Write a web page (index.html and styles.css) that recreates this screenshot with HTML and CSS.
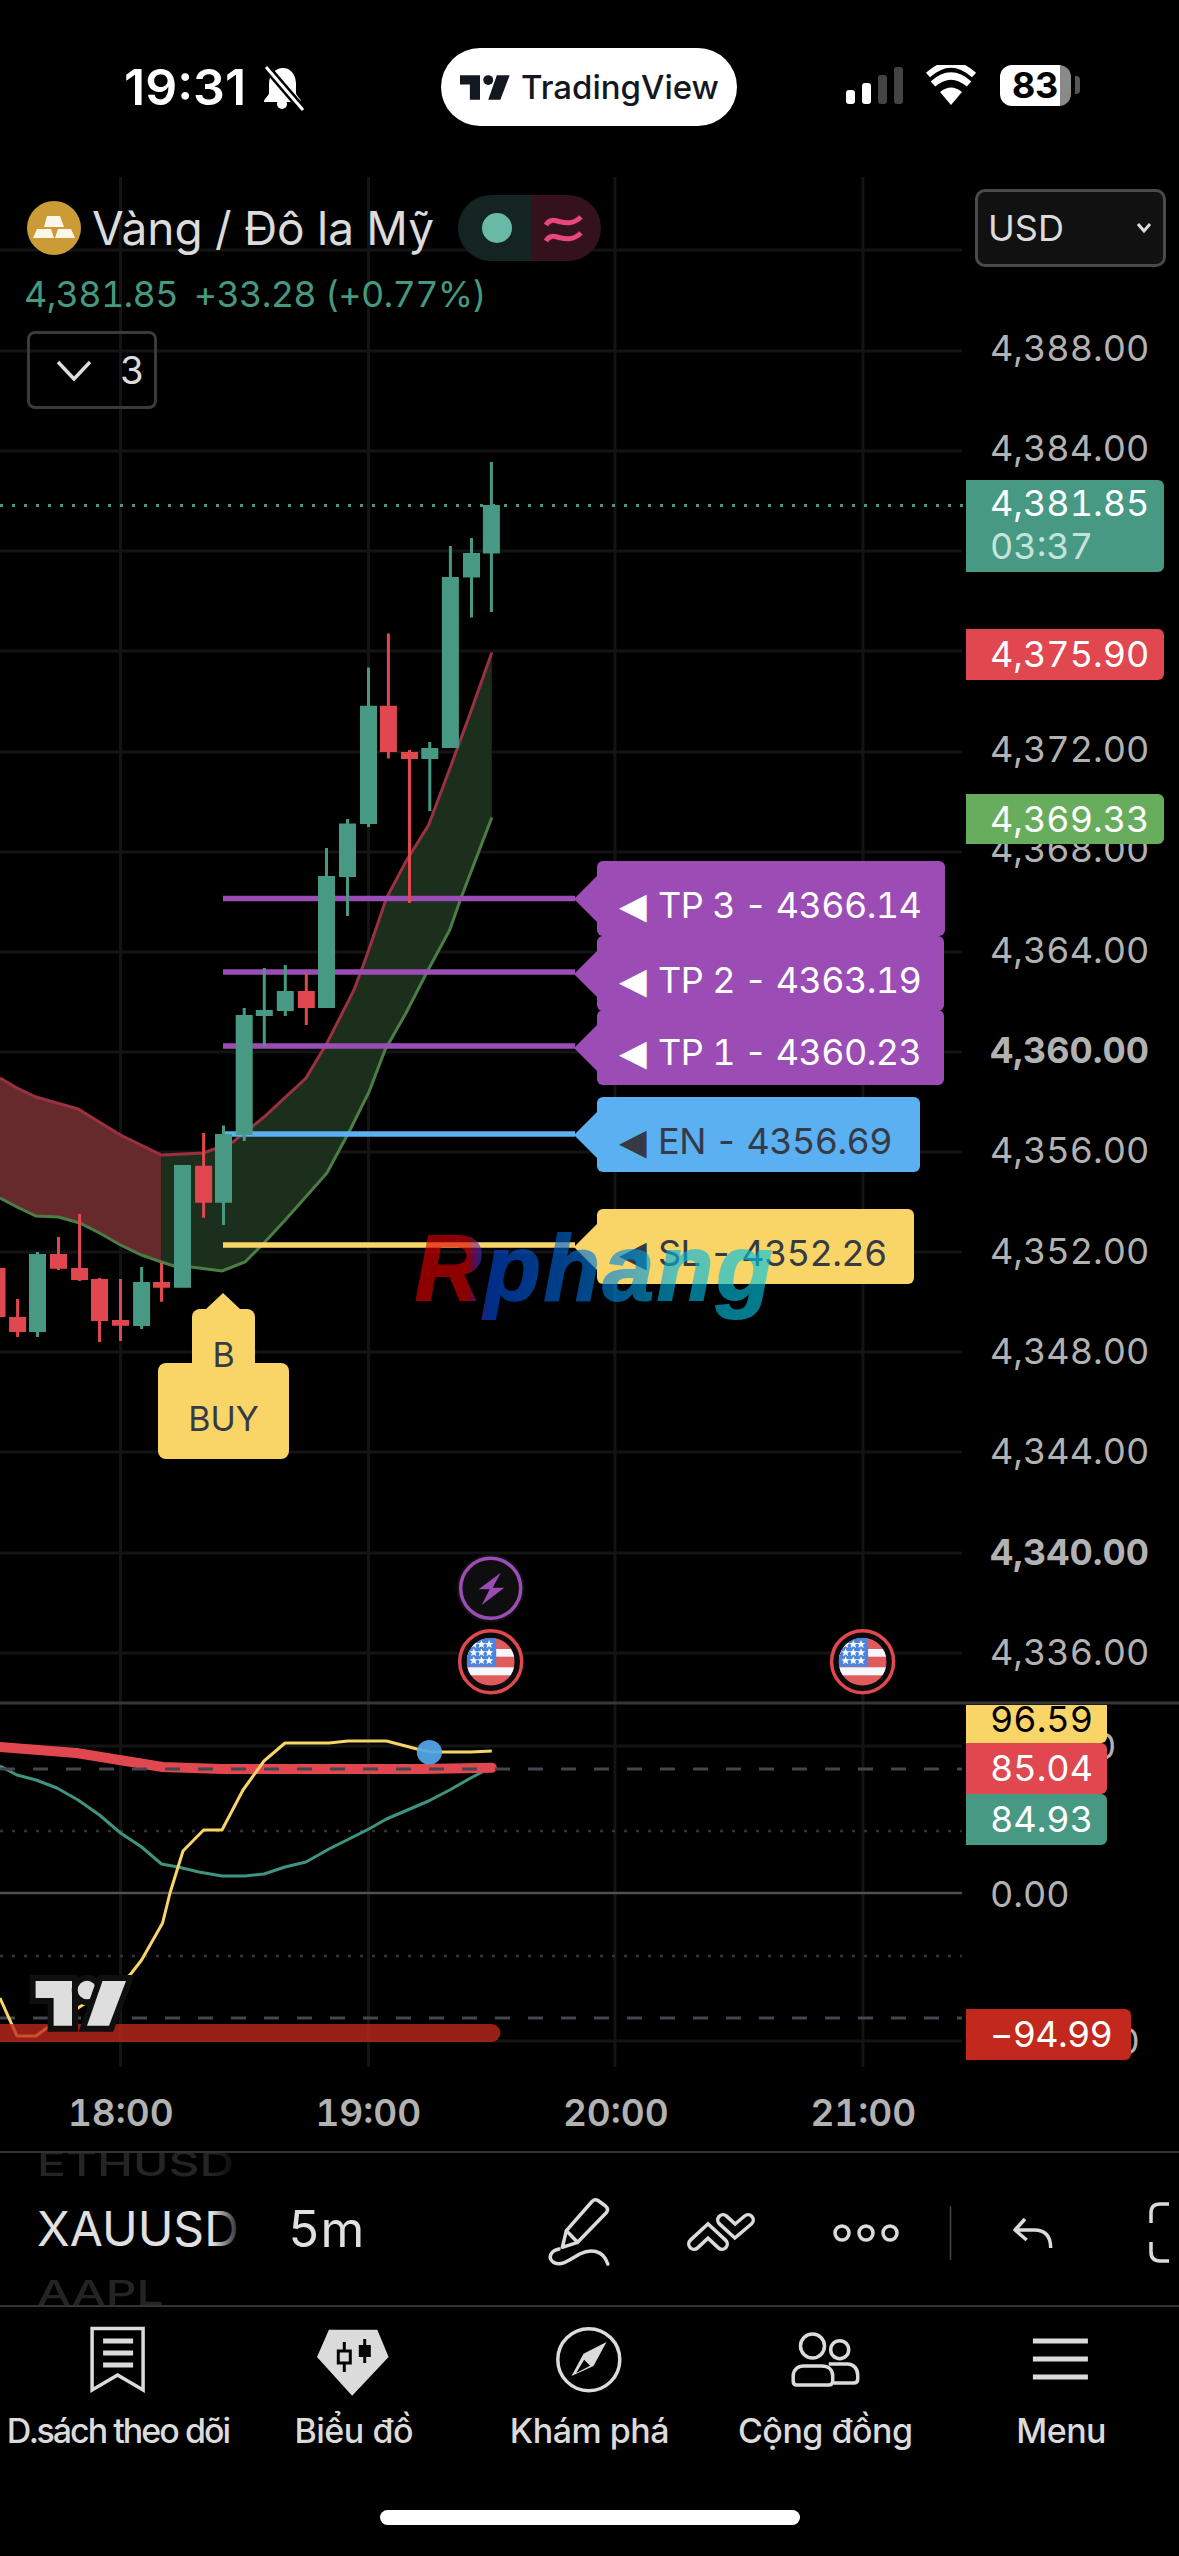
FILE: index.html
```html
<!DOCTYPE html>
<html lang="vi">
<head>
    <meta charset="UTF-8">
    <meta name="viewport" content="width=device-width, initial-scale=1.0">
    <title>Vàng / Đô la Mỹ - TradingView</title>
    <link rel="stylesheet" href="styles.css">
</head>
<body>

<div id="screen">

    <header class="statusbar">
        <div class="status-left">
            <span class="clock">19:31</span>
            <svg class="bell" viewBox="260 66 46 46" width="46" height="46">
                <path fill="#fff" d="M283 69c-8 0-14 7-14 16v9c0 3-5 5-5 9h37c0-4-5-6-5-9v-9c0-9-5-16-13-16z"/>
                <circle fill="#fff" cx="282" cy="105" r="5"/>
                <path stroke="#000" stroke-width="8" d="M266 68l37 43"/>
                <path stroke="#fff" stroke-width="3" d="M266 68l37 43"/>
            </svg>
        </div>
        <div class="brand-pill">
            <svg class="brand-logo" viewBox="0 0 91 45" width="50" height="25">
                <path fill="#131722" d="M0 0H36.4V44.7H18V17H0Z"/>
                <circle fill="#131722" cx="51.4" cy="9" r="9"/>
                <path fill="#131722" d="M67 0H90.4L73.4 44.7H51.4Z"/>
            </svg>
            <span>TradingView</span>
        </div>
        <div class="status-right">
            <div class="signal">
                <i class="bar bar-1"></i><i class="bar bar-2"></i><i class="bar bar-3 off"></i><i class="bar bar-4 off"></i>
            </div>
            <svg class="wifi" viewBox="924 66 54 42" width="54" height="42">
                <path fill="#fff" d="M951 106L940 93Q951 84 962 93Z"/>
                <path fill="none" stroke="#fff" stroke-width="7" d="M933 85Q951 69 969 85"/>
                <path fill="none" stroke="#fff" stroke-width="6" d="M928 76Q951 55 974 76"/>
            </svg>
            <div class="battery">83</div>
            <i class="battery-nub"></i>
        </div>
    </header>

    <main class="chart">
        <svg class="chart-canvas" viewBox="0 170 1179 1981" width="1179" height="1981">
            <defs>
                <polygon id="star" fill="#fff" points="0,-4.4 1.2,-1.4 4.2,-1.4 1.8,0.6 2.7,3.6 0,1.8 -2.7,3.6 -1.8,0.6 -4.2,-1.4 -1.2,-1.4"/>
                <clipPath id="flag-clip"><circle r="24"/></clipPath>
                <g id="us-event">
                    <circle r="31" fill="#0b0b0b" stroke="#e0474f" stroke-width="3.5"/>
                    <g clip-path="url(#flag-clip)">
                        <rect x="-24" y="-24" width="48" height="48" fill="#e25b5b"/>
                        <rect x="-24" y="-12.7" width="48" height="7.7" fill="#f5f7ff"/>
                        <rect x="-24" y="5.6" width="48" height="8" fill="#f5f7ff"/>
                        <rect x="-24" y="-24" width="29.5" height="29" fill="#4a86e0"/>
                        <use href="#star" x="-17" y="-17.3"/><use href="#star" x="-9.3" y="-17.3"/><use href="#star" x="-1.6" y="-17.3"/>
                        <use href="#star" x="-17" y="-9"/><use href="#star" x="-9.3" y="-9"/><use href="#star" x="-1.6" y="-9"/>
                        <use href="#star" x="-17" y="-1"/><use href="#star" x="-9.3" y="-1"/><use href="#star" x="-1.6" y="-1"/>
                    </g>
                </g>
            </defs>

            <!-- grid -->
            <path class="grid" d="M120.5 177V2067M368.5 177V2067M615 177V2067M863 177V2067"/>
            <path class="grid" d="M0 250H962M0 351H962M0 451H962M0 551H962M0 651H962M0 752H962M0 852H962M0 952H962M0 1052H962M0 1152H962M0 1252H962M0 1352H962M0 1452H962M0 1553H962M0 1653H962M0 1746H962M0 2041H962"/>

            <!-- ribbon -->
            <path fill="#672a2c" d="M0 1078L17 1088L36 1097L78 1109L120.5 1135L161.5 1155V1262L141.6 1255L120.5 1245L99.5 1233L79.6 1223L58.5 1217L36 1216L17 1207L0 1198Z"/>
            <path fill="#1c2f1c" d="M161.5 1155L203.6 1153L233 1142L264 1117L306 1078L327 1043L354 990L367 955L386.5 898L405.6 862L428.6 825L449.7 769L470.7 712L491.8 652.5V817.5L461 898L449.7 930L428.6 969L406 1013L385 1050L369 1092L350 1130L327 1173L287 1218L264 1243L245 1262L222 1271L191 1267L174 1266L161.5 1262Z"/>
            <path class="ribbon-up" d="M0 1078L17 1088L36 1097L78 1109L120.5 1135L161.5 1155L203.6 1153L233 1142L264 1117L306 1078L327 1043L354 990L367 955L386.5 898L405.6 862L428.6 825L449.7 769L470.7 712L491.8 652.5"/>
            <path class="ribbon-down" d="M0 1198L17 1207L36 1216L58.5 1217L79.6 1223L99.5 1233L120.5 1245L141.6 1255L161.5 1262L174 1266L191 1267L222 1271L245 1262L264 1243L287 1218L327 1173L350 1130L369 1092L385 1050L406 1013L428.6 969L449.7 930L461 898L491.8 817.5"/>

            <!-- trade levels -->
            <path class="level level-tp" d="M223 898.5H575M223 972H575M223 1046H575"/>
            <path class="level level-en" d="M223 1134H575"/>
            <path class="level level-sl" d="M223 1245H575"/>
            <path class="last-price" d="M0 505.4H966"/>

            <!-- candles -->
            <path class="wick up" d="M491.4 462V612M471.5 538V617.5M450.4 546V577M429.8 742V811M368.5 667.5V827M347.5 819V916M326.5 848V876M285.3 965V1016M264.3 968V1046M244.2 1008V1141M223.5 1125.6V1225M141.6 1267V1329M37.5 1252V1337"/>
            <path class="body up" d="M491.4 505V553.6M471.5 553V577.5M450.4 577V748M429.8 748V759M368.5 705.7V824M347.5 823.6V877M326.5 876V1008M285.3 991V1011M264.3 1010V1016M244.2 1015V1135M223.5 1134V1202.7M182.5 1165V1287.7M141.6 1282V1326M37.5 1254V1332"/>
            <path class="wick down" d="M409.5 750V903M388.4 633.6V758.6M306.3 973V1025M203.6 1133V1217.7M161.5 1262.7V1301.7M120.5 1279V1341M99.5 1278V1342M79.6 1214V1281M58.5 1237V1270M17.6 1299V1337"/>
            <path class="body down" d="M409.5 752V759M388.4 705.7V752M306.3 991V1008M203.6 1165.7V1202.7M161.5 1282V1287.7M120.5 1320V1325.7M99.5 1279V1321M79.6 1268V1280M58.5 1254V1268.7M17.6 1317V1332M-3 1268V1317"/>

            <!-- events -->
            <circle cx="490.7" cy="1588.3" r="34" fill="#111"/>
            <circle cx="490.7" cy="1588.3" r="30" fill="#0e0e0e" stroke="#9c4db5" stroke-width="3.5"/>
            <path fill="#9c4db5" d="M500.7 1572.7L478.7 1589.3H489.7L481.7 1605L504.3 1587.7H492.7Z"/>
            <use href="#us-event" x="490.7" y="1661.7"/>
            <use href="#us-event" x="862.6" y="1661.7"/>

            <!-- indicator pane -->
            <path class="pane-sep" d="M0 1703H1179"/>
            <path class="pane-zero" d="M0 1893H962"/>
            <path class="pane-dot" d="M0 1831H962M0 1956H962"/>
            <path class="ind-green" d="M0 1766L17 1775L36 1780L57 1788L78 1800L99.5 1815L120.5 1833L141.6 1847L161.5 1864L178 1867L199 1872L222 1876L245 1876L264 1874L285 1867L306 1862L329 1849L367 1830L386.5 1819L428.6 1801L449.7 1790L470.7 1778L491.8 1767"/>
            <path class="ind-red" d="M-5 1746.7L76.5 1753L162.6 1767L222 1769L421 1769L491.8 1767.7"/>
            <path class="pane-dash" d="M0 1769H962M0 2018H962"/>
            <path class="ind-yellow" d="M0 1998L17 2036L36 2036L48 2027L130 1975L141.6 1960L162.6 1923L170 1893L183 1851L203.6 1830L222 1830L243 1790L264 1761L285 1743L329 1743L348 1741L386.5 1741L417 1749L430.5 1752L471 1752L491.8 1751"/>
            <ellipse cx="429.4" cy="1752.3" rx="12.6" ry="12.3" fill="#53a7e8" fill-opacity="0.93"/>
            <path class="ind-floor" d="M-10 2033H491.5"/>

            <!-- chart watermark -->
            <g class="tv-mark">
                <path d="M35.6 1981H72V2025.7H53.6V1998H35.6Z"/>
                <circle cx="87" cy="1990" r="9.3"/>
                <path d="M102.5 1981H126L109 2025.7H87Z"/>
            </g>
        </svg>

        <div class="legend">
            <div class="legend-title">
                <svg class="gold-icon" viewBox="27 201 54 54" width="54" height="54">
                    <circle cx="54" cy="228" r="27" fill="#cb9b36"/>
                    <path fill="#fbf6ea" d="M47 216H60L64 227H44ZM37 229H51L54 238H33ZM58 229H71L75 238H55Z"/>
                </svg>
                <span class="symbol-name">Vàng / Đô la Mỹ</span>
                <div class="market-toggle">
                    <div class="toggle-open"><i class="toggle-dot"></i></div>
                    <div class="toggle-delay">
                        <svg viewBox="542 210 44 38" width="44" height="38">
                            <path fill="none" stroke="#e8467f" stroke-width="5" d="M546 226C553 213 565 233 581 218"/>
                            <path fill="none" stroke="#e8467f" stroke-width="5" d="M546 242C553 229 565 249 581 234"/>
                        </svg>
                    </div>
                </div>
            </div>
            <div class="legend-price"><span>4,381.85</span><span>+33.28 (+0.77%)</span></div>
            <div class="legend-count">
                <svg viewBox="0 0 36 22" width="36" height="22">
                    <path fill="none" stroke="#ddd" stroke-width="3.5" d="M2 3L18 20L34 3"/>
                </svg>
                <span>3</span>
            </div>
        </div>

        <div class="currency">
            <span>USD</span>
            <svg viewBox="0 0 16 12" width="16" height="12">
                <path fill="none" stroke="#ddd" stroke-width="3" d="M2 2L8 9L14 2"/>
            </svg>
        </div>

        <div class="price-axis">
            <div class="tick">4,388.00</div>
            <div class="tick">4,384.00</div>
            <div class="tick">4,380.00</div>
            <div class="tick">4,376.00</div>
            <div class="tick">4,372.00</div>
            <div class="tick">4,368.00</div>
            <div class="tick">4,364.00</div>
            <div class="tick tick-major">4,360.00</div>
            <div class="tick">4,356.00</div>
            <div class="tick">4,352.00</div>
            <div class="tick">4,348.00</div>
            <div class="tick">4,344.00</div>
            <div class="tick tick-major">4,340.00</div>
            <div class="tick">4,336.00</div>
        </div>

        <div class="pane-axis">
            <div class="pane-tick">100.00</div>
            <div class="pane-tick">0.00</div>
            <div class="pane-tick">−100.00</div>
        </div>

        <div class="tag tag-last">
            <span>4,381.85</span>
            <span class="countdown">03:37</span>
        </div>
        <div class="tag tag-red-line">4,375.90</div>
        <div class="tag tag-green-line">4,369.33</div>
        <div class="tag tag-k">96.59</div>
        <div class="tag tag-d">85.04</div>
        <div class="tag tag-j">84.93</div>
        <div class="tag tag-floor">−94.99</div>

        <div class="order order-tp order-tp3"><span class="order-arrow">◀</span>TP 3 - 4366.14</div>
        <div class="order order-tp order-tp2"><span class="order-arrow">◀</span>TP 2 - 4363.19</div>
        <div class="order order-tp order-tp1"><span class="order-arrow">◀</span>TP 1 - 4360.23</div>
        <div class="order order-en"><span class="order-arrow">◀</span>EN - 4356.69</div>
        <div class="order order-sl"><span class="order-arrow">◀</span>SL - 4352.26</div>

        <div class="buy-flag">
            <div class="buy-top">B</div>
            <div class="buy-bottom">BUY</div>
        </div>

        <div class="watermark">Rphang</div>

        <div class="time-axis">
            <span>18:00</span>
            <span>19:00</span>
            <span>20:00</span>
            <span>21:00</span>
        </div>
    </main>

    <section class="toolbar">
        <div class="wheel">
            <div class="wheel-item wheel-dim">ETHUSD</div>
            <div class="wheel-item">XAUUSD</div>
            <div class="wheel-item wheel-dim">AAPL</div>
        </div>
        <div class="interval">5m</div>
        <svg class="tools" viewBox="540 2170 630 110" width="630" height="110">
            <g fill="none" stroke="#dbdbdb" stroke-width="3.5" stroke-linejoin="round" stroke-linecap="round">
                <path d="M562.3 2243.3L566.4 2226.7L592 2197.5Q595 2194.5 598 2196.5L605.5 2202Q609 2205 606.5 2208.5L577.6 2238.3Z"/>
                <path d="M566.4 2226.7L577.6 2238.3"/>
                <path d="M607.8 2260C603 2245 590 2245 579.7 2250C570 2256 560 2263 553 2258C548 2254 550 2247 559 2245"/>
                <circle cx="842" cy="2229" r="7"/>
                <circle cx="866" cy="2229" r="7"/>
                <circle cx="890" cy="2229" r="7"/>
                <path d="M1025 2215L1015 2226L1026.7 2236M1015 2226H1034Q1050.7 2226 1050.7 2244" stroke-linecap="butt"/>
                <path d="M1169 2200H1160Q1151 2200 1151 2209V2219M1151 2238V2248Q1151 2257 1160 2257H1169" stroke-linecap="butt"/>
            </g>
            <g fill="none" stroke-linejoin="miter" stroke-linecap="round">
                <path d="M694 2240L708 2227L722 2240" stroke="#dbdbdb" stroke-width="14"/>
                <path d="M694 2240L708 2227L722 2240" stroke="#000" stroke-width="7"/>
                <path d="M723 2216L735 2227L748 2216" stroke="#000" stroke-width="20"/>
                <path d="M723 2216L735 2227L748 2216" stroke="#dbdbdb" stroke-width="14"/>
                <path d="M723 2216L735 2227L748 2216" stroke="#000" stroke-width="7"/>
            </g>
            <path d="M950.5 2202V2256" stroke="#444" stroke-width="1.5"/>
        </svg>
    </section>

    <nav class="tabbar">
        <div class="tab tab-long">
            <svg viewBox="77.9 2325 80 76" width="80" height="76">
                <path fill="none" stroke="#dbdbdb" stroke-width="3.5" d="M92 2330.5H143V2392L117.5 2377L92 2392Z"/>
                <path stroke="#dbdbdb" stroke-width="5" d="M103 2343H133M103 2355H133M103 2367H133"/>
            </svg>
            <span>D.sách theo dõi</span>
        </div>
        <div class="tab">
            <svg viewBox="313.7 2325 80 76" width="80" height="76">
                <path fill="#dbdbdb" d="M328.6 2331.7H377L388.3 2359L351.8 2397.7L316.7 2359Z"/>
                <path stroke="#050505" stroke-width="3" fill="none" d="M344 2344V2353M344 2365V2374M364.4 2341V2347M364.4 2359V2365"/>
                <rect x="338" y="2353" width="12" height="12" fill="#dbdbdb" stroke="#050505" stroke-width="3"/>
                <rect x="358.5" y="2347" width="12" height="12" fill="#050505"/>
            </svg>
            <span>Biểu đồ</span>
        </div>
        <div class="tab">
            <svg viewBox="549.5 2325 80 76" width="80" height="76">
                <circle cx="589.3" cy="2361.7" r="31" fill="none" stroke="#dbdbdb" stroke-width="3.5"/>
                <path fill="#dbdbdb" d="M607 2344L584 2355.7L572 2378L594 2368Z"/>
                <path fill="#050505" d="M584.6 2361.7L590.6 2367.7L576.7 2375Z"/>
            </svg>
            <span>Khám phá</span>
        </div>
        <div class="tab">
            <svg viewBox="785.3 2325 80 76" width="80" height="76">
                <g fill="none" stroke="#dbdbdb" stroke-width="3.5">
                    <circle cx="812.8" cy="2348" r="12"/>
                    <circle cx="840" cy="2351.7" r="9"/>
                    <path d="M793.5 2378C793.5 2372 798 2368 804 2368H822C829 2368 833 2372 833 2378V2383Q833 2387 829 2387H797Q793.5 2387 793.5 2383Z"/>
                    <path d="M829 2366H848C854 2366 858 2371 858 2377V2381Q858 2385 854 2385H834"/>
                </g>
            </svg>
            <span>Cộng đồng</span>
        </div>
        <div class="tab">
            <svg viewBox="1021.1 2325 80 76" width="80" height="76">
                <path stroke="#dbdbdb" stroke-width="5" d="M1033 2343H1088M1033 2361H1088M1033 2379H1088"/>
            </svg>
            <span>Menu</span>
        </div>
    </nav>

    <div class="home-bar"></div>
</div>

</body>
</html>
```

FILE: styles.css
```css
* {
    box-sizing: border-box;
}
html, body {
    margin: 0;
    padding: 0;
    background: #000;
}
body {
    font-family: Inter, "Liberation Sans", sans-serif;
    font-variant-numeric: tabular-nums;
    color: #dbdbdb;
}
#screen {
    width: 1179px;
    height: 2556px;
    overflow: hidden;
    display: flex;
    flex-direction: column;
    background: #000;
}

/* status bar */
.statusbar {
    height: 170px;
    padding: 48px 0 0 124px;
    display: flex;
    align-items: flex-start;
}
.status-left {
    width: 317px;
    height: 78px;
    display: flex;
    align-items: center;
}
.clock {
    font-size: 50px;
    font-weight: 600;
    font-variant-numeric: normal;
    color: #fff;
    width: 136px;
    white-space: nowrap;
}
.bell {
    margin-top: 2px;
}
.brand-pill {
    width: 296px;
    height: 78px;
    border-radius: 39px;
    background: #fff;
    color: #131722;
    display: flex;
    align-items: center;
    padding-left: 19px;
    gap: 11px;
    font-size: 33px;
    font-weight: 500;
}
.status-right {
    margin-left: 109px;
    height: 78px;
    display: flex;
    align-items: flex-start;
    padding-top: 19px;
}
.signal {
    width: 57px;
    height: 37px;
    display: flex;
    align-items: flex-end;
    gap: 7px;
}
.bar {
    width: 9px;
    background: #fff;
    border-radius: 3px;
}
.bar.off {
    background: #444;
}
.bar-1 { height: 14px; }
.bar-2 { height: 21px; }
.bar-3 { height: 29px; }
.bar-4 { height: 37px; }
.wifi {
    margin: -2px 22px 0 21px;
}
.battery {
    width: 71px;
    height: 41px;
    margin-top: -2px;
    border-radius: 12px;
    background: linear-gradient(to right, #fff 60px, #8a8a8a 60px);
    color: #000;
    font-size: 36px;
    font-weight: 700;
    line-height: 41px;
    padding-left: 12px;
}
.battery-nub {
    width: 5px;
    height: 18px;
    margin: 9px 0 0 4px;
    border-radius: 0 4px 4px 0;
    background: #555;
}

/* chart */
.chart {
    position: relative;
    height: 1981px;
    flex: none;
}
.chart-canvas {
    position: absolute;
    left: 0;
    top: 0;
}
.grid {
    fill: none;
    stroke: #141414;
    stroke-width: 3;
}
.ribbon-up, .ribbon-down {
    fill: none;
    stroke-width: 3;
}
.ribbon-up { stroke: #9a3040; }
.ribbon-down { stroke: #4b7e44; }
.level {
    fill: none;
    stroke-width: 5.5;
}
.level-tp { stroke: #9c4db5; }
.level-en { stroke: #5ab0f0; }
.level-sl { stroke: #f9d568; }
.last-price {
    fill: none;
    stroke: #479984;
    stroke-width: 3;
    stroke-dasharray: 3 9;
}
.wick, .body {
    fill: none;
}
.wick { stroke-width: 3; }
.body { stroke-width: 17; }
.up { stroke: #479984; }
.down { stroke: #e0474f; }
.pane-sep {
    stroke: #363636;
    stroke-width: 3;
}
.pane-zero {
    stroke: #505050;
    stroke-width: 2.5;
}
.pane-dot {
    fill: none;
    stroke: #333;
    stroke-width: 2.5;
    stroke-dasharray: 3 9;
}
.pane-dash {
    fill: none;
    stroke: #434651;
    stroke-width: 3;
    stroke-dasharray: 15 18;
}
.ind-green, .ind-red, .ind-yellow {
    fill: none;
    stroke-linejoin: round;
}
.ind-green {
    stroke: #3e9480;
    stroke-width: 3;
}
.ind-yellow {
    stroke: #f9d568;
    stroke-width: 3;
}
.ind-red {
    stroke: #e0474f;
    stroke-width: 10;
    stroke-linecap: round;
}
.ind-floor {
    fill: none;
    stroke: #c2291c;
    stroke-opacity: 0.78;
    stroke-width: 18;
    stroke-linecap: round;
}
.tv-mark {
    fill: #dedede;
    stroke: #0f0f0f;
    stroke-width: 12;
    paint-order: stroke;
}

/* legend */
.legend {
    position: absolute;
    left: 24px;
    top: 25px;
    display: flex;
    flex-direction: column;
    align-items: flex-start;
}
.legend-title {
    display: flex;
    align-items: center;
    height: 66px;
    margin-left: 3px;
}
.gold-icon {
    margin-right: 11px;
}
.symbol-name {
    font-size: 46px;
    width: 366px;
    white-space: nowrap;
}
.market-toggle {
    width: 143px;
    height: 66px;
    border-radius: 33px;
    overflow: hidden;
    display: flex;
}
.toggle-open {
    width: 73px;
    background: #132423;
    display: flex;
    align-items: center;
    padding-left: 24px;
}
.toggle-dot {
    width: 30px;
    height: 30px;
    border-radius: 50%;
    background: #68b9a5;
}
.toggle-delay {
    width: 70px;
    background: #33121e;
    display: flex;
    align-items: center;
    padding-left: 11px;
}
.legend-price {
    display: flex;
    gap: 16px;
    margin-top: 11px;
    font-size: 36px;
    line-height: 44px;
    letter-spacing: -0.7px;
    color: #46987f;
}
.legend-count {
    width: 130px;
    height: 78px;
    margin: 15px 0 0 3px;
    border: 3px solid #3a3a3a;
    border-radius: 8px;
    display: flex;
    align-items: center;
    gap: 28px;
    padding-left: 26px;
    font-size: 38px;
}
.currency {
    position: absolute;
    left: 975px;
    top: 19px;
    width: 191px;
    height: 78px;
    background: #111;
    border: 3px solid #4a4a4a;
    border-radius: 10px;
    display: flex;
    align-items: center;
    justify-content: space-between;
    padding: 0 11px 0 10px;
    font-size: 36px;
}

/* axes */
.price-axis {
    position: absolute;
    left: 990px;
    top: 128px;
    display: flex;
    flex-direction: column;
}
.tick {
    height: 100.3px;
    line-height: 100.3px;
    font-size: 36px;
    color: #b2b2b2;
}
.tick-major {
    font-weight: 700;
    color: #b2b2b2;
}
.pane-axis {
    position: absolute;
    left: 990px;
    top: 1503px;
    display: flex;
    flex-direction: column;
}
.pane-tick {
    height: 147.5px;
    line-height: 147.5px;
    font-size: 36px;
    color: #b2b2b2;
}
.time-axis {
    position: absolute;
    left: 0;
    top: 1921px;
    width: 984px;
    display: grid;
    grid-template-columns: repeat(4, 247.5px);
    margin-left: -3px;
    text-align: center;
    font-size: 37px;
    font-weight: 600;
    color: #b2b2b2;
    line-height: 44px;
}

/* price tags */
.tag {
    position: absolute;
    left: 966px;
    width: 198px;
    height: 50px;
    padding-left: 24px;
    border-radius: 0 6px 6px 0;
    color: #fff;
    font-size: 36px;
    line-height: 50px;
}
.tag-last {
    top: 310px;
    height: 92px;
    background: #479984;
    display: flex;
    flex-direction: column;
    line-height: 43px;
    padding-top: 2px;
}
.countdown {
    color: #c4e3da;
}
.tag-red-line {
    top: 459px;
    height: 51px;
    background: #e0474f;
}
.tag-green-line {
    top: 624px;
    background: #68ad5e;
}
.tag-k, .tag-d, .tag-j {
    width: 141px;
    height: 51px;
}
.tag-k {
    top: 1535px;
    height: 38px;
    line-height: 28px;
    background: #f9d568;
    color: #000;
    border-top-right-radius: 0;
}
.tag-d {
    top: 1573px;
    background: #e0474f;
}
.tag-j {
    top: 1624px;
    background: #479984;
}
.tag-floor {
    top: 1839px;
    width: 165px;
    height: 51px;
    background: #c2291c;
    letter-spacing: -0.7px;
}

/* order labels */
.order {
    position: absolute;
    left: 597px;
    height: 75px;
    padding: 13px 0 0 22px;
    display: flex;
    align-items: center;
    border-radius: 6px;
    font-size: 36px;
    letter-spacing: -0.6px;
    white-space: nowrap;
}
.order::before {
    content: "";
    position: absolute;
    left: -23px;
    top: 15px;
    border-style: solid;
    border-width: 23px 23px 23px 0;
    border-color: transparent;
    border-right-color: inherit;
}
.order-arrow {
    font-family: "DejaVu Sans", sans-serif;
    font-size: 36px;
    margin-right: 12px;
}
.order-tp {
    width: 348px;
    background: #9c4db5;
    border-color: #9c4db5;
    color: #fff;
}
.order-tp3 { top: 691px; }
.order-tp2 { top: 766px; width: 347px; }
.order-tp1 { top: 840px; width: 347px; padding-top: 9px; }
.order-en {
    top: 927px;
    width: 323px;
    background: #5ab0f0;
    border-color: #5ab0f0;
    color: #363a45;
}
.order-sl {
    top: 1039px;
    width: 317px;
    background: #f9d568;
    border-color: #f9d568;
    color: #363a45;
}

/* buy flag */
.buy-flag {
    position: absolute;
    left: 158px;
    top: 1139px;
    width: 131px;
    display: flex;
    flex-direction: column;
    align-items: center;
    color: #363a45;
    font-size: 34px;
}
.buy-top {
    position: relative;
    z-index: 1;
    width: 63px;
    height: 54px;
    background: #f9d568;
    border-radius: 8px 8px 0 0;
    padding-top: 26px;
    text-align: center;
    line-height: 40px;
}
.buy-top::before {
    content: "";
    position: absolute;
    left: 14px;
    top: -16px;
    border-style: solid;
    border-width: 0 17px 16px 17px;
    border-color: transparent transparent #f9d568 transparent;
}
.buy-bottom {
    width: 131px;
    height: 96px;
    background: #f9d568;
    border-radius: 8px;
    text-align: center;
    padding-top: 34px;
    line-height: 44px;
}

.watermark {
    position: absolute;
    left: 415px;
    top: 1052px;
    padding: 0 14px 14px 0;
    font-family: "Liberation Sans", sans-serif;
    font-size: 92px;
    font-weight: 700;
    font-style: italic;
    line-height: 92px;
    letter-spacing: 3px;
    background: linear-gradient(to right, #e00000 0, #e00000 52px, #6a20a0 62px, #0048d8 75px, #0070d8 170px, #00b4e0 260px, #00c8e0 360px);
    -webkit-background-clip: text;
    background-clip: text;
    color: transparent;
    -webkit-text-stroke: 2px transparent;
    opacity: 0.63;
}

/* toolbar */
.toolbar {
    height: 156px;
    flex: none;
    border-top: 2px solid #333;
    border-bottom: 2px solid #333;
    display: flex;
    align-items: center;
    overflow: hidden;
}
.wheel {
    position: relative;
    width: 254px;
    padding-left: 37px;
    font-size: 48px;
    color: #e0e0e0;
    white-space: nowrap;
}
.wheel::after {
    content: "";
    position: absolute;
    left: 212px;
    top: 0;
    bottom: 0;
    width: 32px;
    background: linear-gradient(to right, rgba(0, 0, 0, 0), #000);
}
.wheel-item {
    height: 64.5px;
    line-height: 64.5px;
}
.wheel-dim {
    color: #242424;
    font-weight: 500;
    transform: scaleY(0.72);
    transform-origin: left center;
}
.interval {
    width: 248px;
    font-size: 50px;
    padding-left: 34px;
    color: #e0e0e0;
}
.tools {
    flex: none;
    margin-left: 38px;
}

/* bottom tabs */
.tabbar {
    display: grid;
    grid-template-columns: repeat(5, 235.8px);
    padding-top: 16px;
}
.tab {
    display: flex;
    flex-direction: column;
    align-items: center;
    font-size: 34px;
    font-weight: 500;
    line-height: 40px;
    white-space: nowrap;
    letter-spacing: -0.5px;
}
.tab-long {
    letter-spacing: -2px;
}
.tab span {
    margin-top: 12px;
}
.home-bar {
    width: 420px;
    height: 15px;
    border-radius: 8px;
    background: #fff;
    margin: 59px auto 0;
}
```
